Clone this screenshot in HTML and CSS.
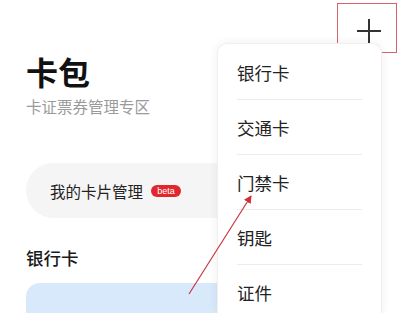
FILE: index.html
```html
<!DOCTYPE html>
<html lang="zh">
<head>
<meta charset="utf-8">
<link rel="stylesheet" href="styles.css">
</head>
<body>
<div class="page">
  <div class="head">
    <h1 class="title">卡包</h1>
    <p class="subtitle">卡证票券管理专区</p>
  </div>
  <div class="pill">
    <span class="pill-text">我的卡片管理</span>
    <span class="badge">beta</span>
  </div>
  <h2 class="section">银行卡</h2>
  <div class="bank-card"></div>
</div>

<div class="add-btn">
  <svg width="24" height="24" viewBox="0 0 24 24"><path d="M12 0V24M0 12H24" stroke="#333" stroke-width="2" fill="none"/></svg>
</div>

<div class="menu">
  <div class="item">银行卡</div>
  <div class="item">交通卡</div>
  <div class="item">门禁卡</div>
  <div class="item">钥匙</div>
  <div class="item last">证件</div>
</div>

<svg class="arrow" width="406" height="313" viewBox="0 0 406 313">
  <defs>
    <marker id="ah" markerWidth="8" markerHeight="8" refX="7" refY="4" orient="auto" markerUnits="userSpaceOnUse">
      <path d="M0 0L8 4L0 8Z" fill="#cf2f36"/>
    </marker>
  </defs>
  <line x1="189" y1="294" x2="251" y2="196" stroke="#c9373e" stroke-width="1.2" marker-end="url(#ah)"/>
</svg>
</body>
</html>
```

FILE: styles.css
```css
html, body {
  margin: 0;
  padding: 0;
  background: #fff;
  overflow: hidden;
  height: 313px;
}
body {
  font-family: "Noto Sans CJK SC", "Noto Sans", sans-serif;
  color: #1a1a1a;
  position: relative;
}
.page {
  padding: 53px 0 0 26px;
  display: flex;
  flex-direction: column;
}
.title {
  margin: 0;
  font-size: 32px;
  line-height: 36px;
  font-weight: 600;
  color: #111;
}
.subtitle {
  margin: 7px 0 0;
  font-size: 15.5px;
  line-height: 20px;
  color: #9a9a9a;
}
.pill {
  margin-top: 47px;
  height: 55px;
  width: 300px;
  border-radius: 28px;
  background: #f5f5f5;
  display: flex;
  align-items: center;
  padding-left: 24px;
  box-sizing: border-box;
}
.pill-text {
  font-size: 15.5px;
  color: #222;
}
.badge {
  margin-left: 8px;
  width: 30px;
  height: 12px;
  border-radius: 6px;
  background: #e2262e;
  color: #fff;
  font-family: "Liberation Sans", sans-serif;
  font-size: 9px;
  line-height: 12px;
  text-align: center;
}
.section {
  margin: 28px 0 0;
  font-size: 17.5px;
  line-height: 24px;
  font-weight: 500;
  color: #1a1a1a;
}
.bank-card {
  margin-top: 13px;
  height: 30px;
  width: 300px;
  border-radius: 14px 0 0 0;
  background: #d8e9fb;
}
.add-btn {
  position: absolute;
  left: 337px;
  top: 3px;
  width: 60px;
  height: 50px;
  box-sizing: border-box;
  border: 1.5px solid #d6656b;
}
.add-btn svg {
  position: absolute;
  left: 19px;
  top: 15px;
}
.menu {
  position: absolute;
  left: 217px;
  top: 43px;
  width: 165px;
  height: 270px;
  background: #fff;
  border-radius: 10px 10px 0 0;
  box-shadow: 0 0 10px rgba(0,0,0,0.07);
  border: 1px solid #f0f0f0;
  border-bottom: none;
  box-sizing: border-box;
  padding: 1px 19px 0;
  overflow: hidden;
}
.item {
  height: 54px;
  border-bottom: 1px solid #ececec;
  display: flex;
  align-items: center;
  font-size: 17.5px;
  color: #222;
}
.item.last {
  border-bottom: none;
}
.arrow {
  position: absolute;
  left: 0;
  top: 0;
  pointer-events: none;
}
```
